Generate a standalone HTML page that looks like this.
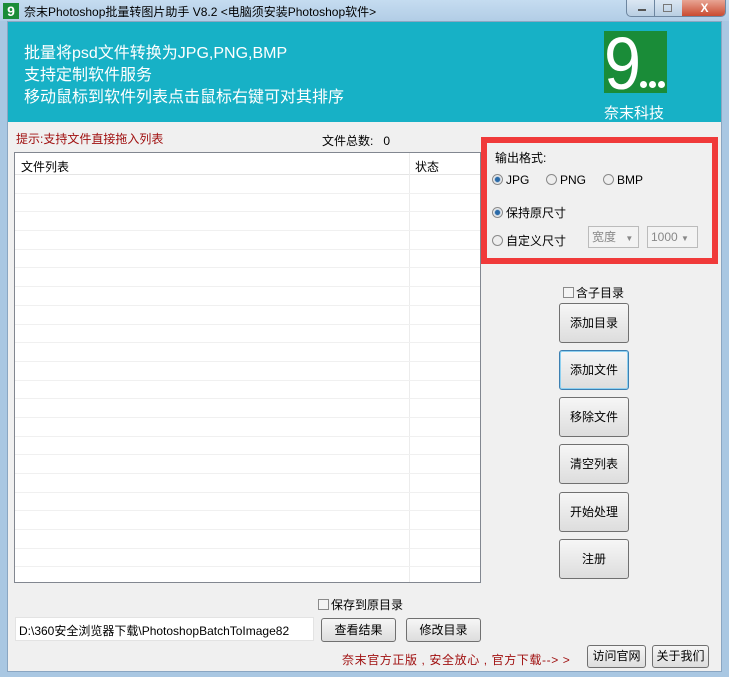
<!DOCTYPE html><html><head><meta charset="utf-8"><style>
*{box-sizing:border-box;margin:0;padding:0}
body{width:729px;height:677px;overflow:hidden;background:#a9c7e2;font-family:"Liberation Sans","Noto Sans CJK SC",sans-serif;font-size:12px;color:#000;position:relative}
.a{position:absolute}
.title{left:0;top:0;width:729px;height:21px;background:linear-gradient(#c5dcf0,#b2cde6)}
.client{left:7px;top:21px;width:715px;height:651px;background:#f0f0f0;border:1px solid #8aa6c2}
.banner{left:8px;top:22px;width:713px;height:100px;background:#17b1c6}
.btn{position:absolute;border:1px solid #707070;border-radius:3px;background:linear-gradient(#f6f6f6,#dddddd);text-align:center;font-size:12px}
.rows div{height:18.7px;border-bottom:1px solid #f0f0f0}
.radio{display:inline-block;width:11px;height:11px;border-radius:50%;border:1px solid #8a8a8a;background:#eee;vertical-align:-1px;margin-right:3px}
.radio.on{background:radial-gradient(#2a6aa8 35%,#bcd 45%,#eee 60%)}
.cb{display:inline-block;width:11px;height:11px;border:1px solid #8a8a8a;background:#f4f4f4;vertical-align:-1px;margin-right:2px}
.sel{position:absolute;border:1px solid #bbb;background:#f3f3f3;color:#888;height:22px;line-height:20px;padding-left:3px;font-size:12px}
.dot{position:absolute;width:7px;height:7px;border-radius:50%;background:#fff;top:50px}
</style></head><body>
<div class="a title"></div>
<div class="a" style="left:3px;top:3px;width:16px;height:16px;background:#1a8c38;color:#fff;font-weight:bold;font-size:14px;line-height:16px;text-align:center">9</div>
<div class="a" style="left:24px;top:3px;font-size:12px">奈末Photoshop批量转图片助手 V8.2 &lt;电脑须安装Photoshop软件&gt;</div>
<div class="a" style="left:626px;top:0;width:100px;height:17px;border:1px solid #6d86a0;border-top:none;border-radius:0 0 5px 5px;background:linear-gradient(#dbe7f3,#b9cee2);overflow:hidden">
<div class="a" style="left:55px;top:0;width:45px;height:17px;background:linear-gradient(#e8a594,#c8452a);color:#fff;font-weight:bold;text-align:center;line-height:16px">X</div>
<div class="a" style="left:27px;top:0;width:1px;height:17px;background:#6d86a0"></div>
<div class="a" style="left:11px;top:9px;width:8px;height:2px;background:#555"></div>
<div class="a" style="left:36px;top:4px;width:9px;height:8px;border:1px solid #777"></div>
</div>
<div class="a client"></div>
<div class="a banner"></div>
<div class="a" style="left:24px;top:43px;color:#fff;font-size:16px;line-height:22px">批量将psd文件转换为JPG,PNG,BMP<br>支持定制软件服务<br>移动鼠标到软件列表点击鼠标右键可对其排序</div>
<div class="a" style="left:604px;top:31px;width:63px;height:62px;background:#1a8c38;overflow:hidden"><div class="a" style="left:0px;top:-4px;color:#fff;font-size:74px;line-height:74px;transform:scaleX(0.9);transform-origin:left">9</div><div class="dot" style="left:36px"></div><div class="dot" style="left:45px"></div><div class="dot" style="left:54px"></div></div>
<div class="a" style="left:604px;top:102px;color:#fff;font-size:15px">奈末科技</div>
<div class="a" style="left:16px;top:130px;color:#a01010">提示:支持文件直接拖入列表</div>
<div class="a" style="left:322px;top:132px">文件总数:&nbsp;&nbsp;&nbsp;0</div>
<div class="a" style="left:14px;top:152px;width:467px;height:431px;border:1px solid #828790;background:#fff">
<div class="a" style="left:0;top:0;width:465px;height:22px;border-bottom:1px solid #e5e5e5"></div>
<div class="a" style="left:394px;top:0;width:1px;height:429px;background:#ececec"></div>
<div class="a" style="left:6px;top:5px">文件列表</div><div class="a" style="left:400px;top:5px">状态</div>
<div class="a rows" style="left:0;top:22px;width:465px"><div></div><div></div><div></div><div></div><div></div><div></div><div></div><div></div><div></div><div></div><div></div><div></div><div></div><div></div><div></div><div></div><div></div><div></div><div></div><div></div><div></div></div>
</div>
<div class="a" style="left:481px;top:137px;width:237px;height:127px;border:6px solid #f03a3a"></div>
<div class="a" style="left:495px;top:149px">输出格式:</div>
<div class="a" style="left:492px;top:173px"><span class="radio on"></span>JPG</div>
<div class="a" style="left:546px;top:173px"><span class="radio"></span>PNG</div>
<div class="a" style="left:603px;top:173px"><span class="radio"></span>BMP</div>
<div class="a" style="left:492px;top:204px"><span class="radio on"></span>保持原尺寸</div>
<div class="a" style="left:492px;top:232px"><span class="radio"></span>自定义尺寸</div>
<div class="sel" style="left:588px;top:226px;width:51px">宽度 <span style="font-size:8px;margin-left:6px">▼</span></div>
<div class="sel" style="left:647px;top:226px;width:51px">1000 <span style="font-size:8px">▼</span></div>
<div class="a" style="left:563px;top:284px"><span class="cb"></span>含子目录</div>
<div class="btn" style="left:559px;top:303px;width:70px;height:40px;line-height:38px">添加目录</div>
<div class="btn" style="left:559px;top:350px;width:70px;height:40px;line-height:38px;border-color:#3c7fb1;box-shadow:inset 0 0 0 1px #8ed0f0">添加文件</div>
<div class="btn" style="left:559px;top:397px;width:70px;height:40px;line-height:38px">移除文件</div>
<div class="btn" style="left:559px;top:444px;width:70px;height:40px;line-height:38px">清空列表</div>
<div class="btn" style="left:559px;top:492px;width:70px;height:40px;line-height:38px">开始处理</div>
<div class="btn" style="left:559px;top:539px;width:70px;height:40px;line-height:38px">注册</div>
<div class="a" style="left:318px;top:596px"><span class="cb"></span>保存到原目录</div>
<div class="a" style="left:15px;top:617px;width:299px;height:24px;background:#fff;border:1px solid #e3e3e3;padding:4px 3px">D:\360安全浏览器下载\PhotoshopBatchToImage82</div>
<div class="btn" style="left:321px;top:618px;width:75px;height:24px;line-height:22px">查看结果</div>
<div class="btn" style="left:406px;top:618px;width:75px;height:24px;line-height:22px">修改目录</div>
<div class="a" style="left:342px;top:651px;color:#a01010;letter-spacing:0.6px">奈末官方正版 , 安全放心 , 官方下载--&gt; &gt;</div>
<div class="btn" style="left:587px;top:645px;width:59px;height:23px;line-height:21px">访问官网</div>
<div class="btn" style="left:652px;top:645px;width:57px;height:23px;line-height:21px">关于我们</div>
</body></html>
